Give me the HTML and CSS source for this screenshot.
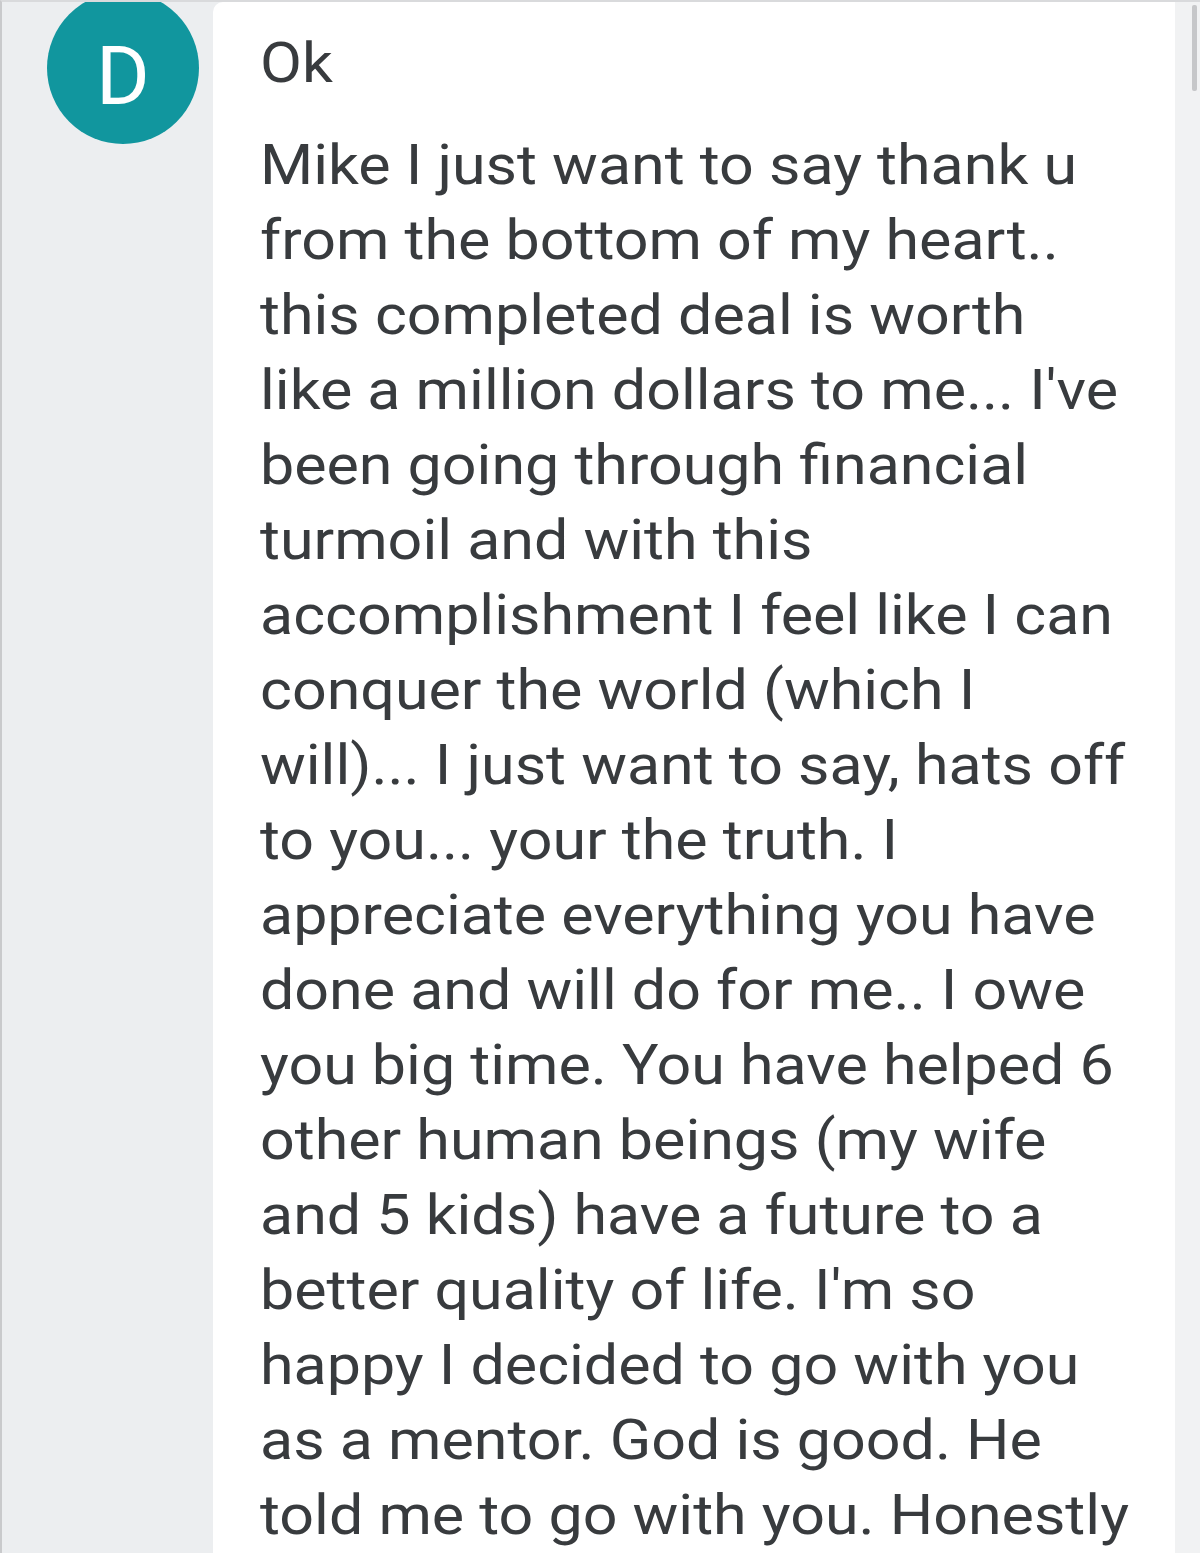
FILE: index.html
```html
<!DOCTYPE html>
<html>
<head>
<meta charset="utf-8">
<link rel="stylesheet" href="styles.css">
</head>
<body>
<div class="frame">
  <div class="side">
    <div class="avatar">D</div>
  </div>
  <div class="bubble">
    <p class="msg msg-short">Ok</p>
    <p class="msg">Mike I just want to say thank u<br>from the bottom of my heart..<br>this completed deal is worth<br>like a million dollars to me... I've<br>been going through financial<br>turmoil and with this<br>accomplishment I feel like I can<br>conquer the world (which I<br>will)... I just want to say, hats off<br>to you... your the truth. I<br>appreciate everything you have<br>done and will do for me.. I owe<br>you big time. You have helped 6<br>other human beings (my wife<br>and 5 kids) have a future to a<br>better quality of life. I'm so<br>happy I decided to go with you<br>as a mentor. God is good. He<br>told me to go with you. Honestly</p>
  </div>
  <div class="scroll">
    <div class="thumb"></div>
  </div>
</div>
</body>
</html>
```

FILE: styles.css
```css
html, body {
  margin: 0;
  padding: 0;
  background: #eceef0;
  height: 1553px;
  overflow: hidden;
}
.frame {
  display: flex;
  height: 1553px;
  border-top: 2px solid #d9dadc;
  border-left: 2px solid #c9cacc;
  box-sizing: border-box;
}
.side {
  width: 211px;
  flex: none;
  position: relative;
  overflow: hidden;
}
.avatar {
  position: absolute;
  left: 45px;
  top: -10px;
  width: 152px;
  height: 152px;
  border-radius: 50%;
  background: #11969e;
  color: #ffffff;
  font-family: Roboto, "Liberation Sans", sans-serif;
  font-size: 82px;
  line-height: 152px;
  text-align: center;
  padding-top: 8px;
  box-sizing: border-box;
}
.bubble {
  flex: 1;
  background: #ffffff;
  border-top-left-radius: 10px;
  padding: 24px 0 0 47px;
  overflow: hidden;
}
.msg {
  margin: 0;
  font-family: Roboto, "Liberation Sans", sans-serif;
  font-size: 55px;
  line-height: 75px;
  color: #383b3e;
  white-space: nowrap;
  transform: scaleX(1.108);
  transform-origin: left top;
}
.msg-short {
  margin-bottom: 27px;
}
.scroll {
  width: 25px;
  flex: none;
  background: #f1f2f3;
  position: relative;
}
.thumb {
  position: absolute;
  left: 17px;
  top: 3px;
  width: 5px;
  height: 86px;
  background: #c6c7c9;
  border-radius: 2px;
}
```
